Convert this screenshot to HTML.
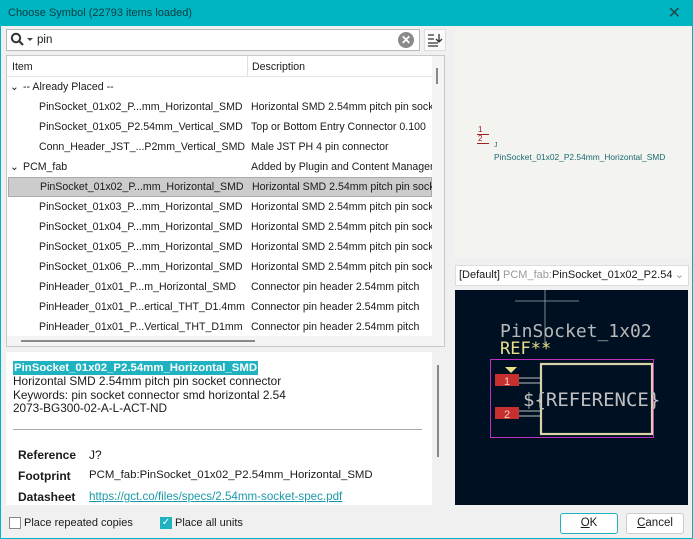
<!DOCTYPE html>
<html><head><style>
*{margin:0;padding:0;box-sizing:border-box}
body{width:693px;height:539px;overflow:hidden;background:#f0f0f0;font-family:"Liberation Sans",sans-serif;font-size:11px;color:#1a1a1a;position:relative}
.abs{position:absolute}
.title{left:0;top:0;width:693px;height:26px;background:#00b5c2;color:#0b3b40;font-size:11px;padding:7px 0 0 8px}
.frame{left:0;top:26px;width:693px;height:513px;border:1px solid #00b5c2;border-top:none}
.row{position:absolute;left:0;height:20px;line-height:20px;white-space:nowrap;width:425px;font-size:10.6px}
.row .a{position:absolute;left:32px}
.row .b{position:absolute;left:244px;width:181px;overflow:hidden}
</style></head><body>
<div class="abs title">Choose Symbol (22793 items loaded)</div>
<div class="abs" style="right:12px;top:3px;font-size:16px;color:#1a4a50">✕</div>
<div class="abs frame"></div>

<!-- search -->
<div class="abs" style="left:6px;top:29px;width:414px;height:22px;background:#fff;border:1px solid #b8b8b8"></div>
<svg class="abs" style="left:10px;top:32px" width="26" height="16"><circle cx="6" cy="6" r="4.2" fill="none" stroke="#333" stroke-width="2"/><line x1="9" y1="9" x2="13" y2="13" stroke="#333" stroke-width="2.2"/><path d="M17 6h6l-3 3z" fill="#444"/></svg>
<div class="abs" style="left:37px;top:34px;font-size:11.5px">pin</div>
<div class="abs" style="left:398px;top:32px;width:16px;height:16px;border-radius:50%;background:#8a8a8a;color:#fff;font-size:12px;line-height:16px;text-align:center;font-weight:bold">✕</div>
<div class="abs" style="left:424px;top:29px;width:22px;height:22px;background:#fafafa;border:1px solid #ddd"></div>
<svg class="abs" style="left:427px;top:33px" width="16" height="14"><path d="M1 2h6M1 6h6M1 10h10M1 13h10M12 1v8M9 6l3 3 3-3" stroke="#333" stroke-width="1.3" fill="none"/></svg>

<!-- tree -->
<div class="abs" style="left:6px;top:55px;width:439px;height:292px;background:#fff;border:1px solid #c8c8c8;overflow:hidden">
 <div class="abs" style="left:0;top:0;width:425px;height:21px;border-bottom:1px solid #e4e4e4"></div>
 <div class="abs" style="left:240px;top:0;width:1px;height:21px;background:#e0e0e0"></div>
 <div class="abs" style="left:5px;top:5px;font-size:10.6px">Item</div>
 <div class="abs" style="left:245px;top:5px;font-size:10.6px">Description</div>
 <div class="row" style="top:21px"><span style="position:absolute;left:3px">⌄</span><span style="position:absolute;left:16px">-- Already Placed --</span></div>
 <div class="row" style="top:41px"><span class="a">PinSocket_01x02_P...mm_Horizontal_SMD</span><span class="b">Horizontal SMD 2.54mm pitch pin socket</span></div>
 <div class="row" style="top:61px"><span class="a">PinSocket_01x05_P2.54mm_Vertical_SMD</span><span class="b">Top or Bottom Entry Connector 0.100</span></div>
 <div class="row" style="top:81px"><span class="a">Conn_Header_JST_...P2mm_Vertical_SMD</span><span class="b">Male JST PH 4 pin connector</span></div>
 <div class="row" style="top:101px"><span style="position:absolute;left:3px">⌄</span><span style="position:absolute;left:16px">PCM_fab</span><span class="b">Added by Plugin and Content Manager</span></div>
 <div class="row" style="top:121px;background:#cccccc;border:1px solid #aaa;left:1px;width:424px;line-height:18px"><span class="a" style="left:31px">PinSocket_01x02_P...mm_Horizontal_SMD</span><span class="b" style="left:243px">Horizontal SMD 2.54mm pitch pin socket</span></div>
 <div class="row" style="top:141px"><span class="a">PinSocket_01x03_P...mm_Horizontal_SMD</span><span class="b">Horizontal SMD 2.54mm pitch pin socket</span></div>
 <div class="row" style="top:161px"><span class="a">PinSocket_01x04_P...mm_Horizontal_SMD</span><span class="b">Horizontal SMD 2.54mm pitch pin socket</span></div>
 <div class="row" style="top:181px"><span class="a">PinSocket_01x05_P...mm_Horizontal_SMD</span><span class="b">Horizontal SMD 2.54mm pitch pin socket</span></div>
 <div class="row" style="top:201px"><span class="a">PinSocket_01x06_P...mm_Horizontal_SMD</span><span class="b">Horizontal SMD 2.54mm pitch pin socket</span></div>
 <div class="row" style="top:221px"><span class="a">PinHeader_01x01_P...m_Horizontal_SMD</span><span class="b">Connector pin header 2.54mm pitch</span></div>
 <div class="row" style="top:241px"><span class="a">PinHeader_01x01_P...ertical_THT_D1.4mm</span><span class="b">Connector pin header 2.54mm pitch</span></div>
 <div class="row" style="top:261px"><span class="a">PinHeader_01x01_P...Vertical_THT_D1mm</span><span class="b">Connector pin header 2.54mm pitch</span></div>
 <div class="abs" style="left:425px;top:0;width:13px;height:292px;background:#f4f4f4"></div>
 <div class="abs" style="left:429px;top:12px;width:2px;height:16px;background:#888"></div>
 <div class="abs" style="left:0;top:280px;width:425px;height:11px;background:#f4f4f4"></div>
 <div class="abs" style="left:14px;top:284px;width:234px;height:2px;background:#888"></div>
</div>

<!-- info -->
<div class="abs" style="left:6px;top:352px;width:426px;height:153px;background:#fff"></div>
<div class="abs" style="left:437px;top:365px;width:2px;height:92px;background:#888"></div>
<div class="abs" style="left:13px;top:361px;background:#1fb2c0;color:#fff;font-weight:bold;font-size:11.4px;padding:0 1px;line-height:14px">PinSocket_01x02_P2.54mm_Horizontal_SMD</div>
<div class="abs" style="left:13px;top:375px;font-size:11.8px;line-height:13.5px">Horizontal SMD 2.54mm pitch pin socket connector<br>Keywords: pin socket connector smd horizontal 2.54<br>2073-BG300-02-A-L-ACT-ND</div>
<div class="abs" style="left:13px;top:429px;width:409px;height:1px;background:#aaa"></div>
<div class="abs" style="left:18px;top:448px;font-weight:bold;font-size:12px">Reference</div>
<div class="abs" style="left:89px;top:448px;font-size:12px">J?</div>
<div class="abs" style="left:18px;top:469px;font-weight:bold;font-size:12px">Footprint</div>
<div class="abs" style="left:89px;top:469px;font-size:11.4px">PCM_fab:PinSocket_01x02_P2.54mm_Horizontal_SMD</div>
<div class="abs" style="left:18px;top:490px;font-weight:bold;font-size:12px">Datasheet</div>
<div class="abs" style="left:89px;top:490px;font-size:11.6px;color:#1a9aa8;text-decoration:underline">https://gct.co/files/specs/2.54mm-socket-spec.pdf</div>

<!-- bottom -->
<div class="abs" style="left:9px;top:517px;width:12px;height:12px;border:1px solid #888;background:#fff"></div>
<div class="abs" style="left:24px;top:517px">Place repeated copies</div>
<div class="abs" style="left:160px;top:517px;width:12px;height:12px;background:#1fb2c0;color:#fff;font-size:10px;line-height:12px;text-align:center">✓</div>
<div class="abs" style="left:175px;top:517px">Place all units</div>
<div class="abs" style="left:560px;top:513px;width:58px;height:21px;border:1.5px solid #1fb2c0;border-radius:3px;background:#fff;text-align:center;line-height:18px;font-size:11.5px"><u>O</u>K</div>
<div class="abs" style="left:626px;top:513px;width:58px;height:21px;border:1px solid #ccc;border-radius:3px;background:#fff;text-align:center;line-height:19px;font-size:11.5px"><u>C</u>ancel</div>

<!-- symbol preview -->
<div class="abs" style="left:455px;top:28px;width:235px;height:230px;background:#f3f3f0"></div>
<div class="abs" style="left:478px;top:125px;color:#a02020;font-size:8px;line-height:9px">1<br>2</div>
<div class="abs" style="left:477px;top:134px;width:12px;height:1px;background:#a02020"></div>
<div class="abs" style="left:477px;top:143px;width:12px;height:1px;background:#a02020"></div>
<div class="abs" style="left:494px;top:142px;color:#1a6a70;font-size:7px">J</div>
<div class="abs" style="left:494px;top:152px;color:#1a6a70;font-size:8.4px">PinSocket_01x02_P2.54mm_Horizontal_SMD</div>

<!-- dropdown -->
<div class="abs" style="left:455px;top:265px;width:234px;height:21px;background:#fff;border:1px solid #ddd;font-size:11px;line-height:19px;padding-left:3px;white-space:nowrap;overflow:hidden">[Default] <span style="color:#999">PCM_fab:</span>PinSocket_01x02_P2.54m<span style="position:absolute;right:4px;top:0;background:#fff;color:#999;padding-left:3px">⌄</span></div>

<!-- footprint -->
<svg class="abs" style="left:455px;top:290px" width="233" height="215">
<rect width="233" height="215" fill="#001023"/>
<line x1="90" y1="0" x2="90" y2="55" stroke="#9aa" stroke-width="0.8"/>
<line x1="60" y1="11" x2="124" y2="11" stroke="#9aa" stroke-width="0.8"/>
<text x="45" y="47" fill="#b8b8b8" font-family="DejaVu Sans Mono,monospace" font-size="18">PinSocket_1x02</text>
<text x="45" y="64" fill="#e8e088" font-family="DejaVu Sans Mono,monospace" font-size="17">REF**</text>
<rect x="35.5" y="69.5" width="163" height="78" fill="none" stroke="#c030c0" stroke-width="1"/>
<path d="M50 77h12l-6 6z" fill="#e8e088"/>
<rect x="40" y="84" width="24" height="12" fill="#c83030"/><text x="49" y="95" fill="#f0d0d0" font-size="11">1</text>
<rect x="40" y="117" width="24" height="12" fill="#c83030"/><text x="49" y="128" fill="#f0d0d0" font-size="11">2</text>
<path d="M64 88h22M64 93h22M64 121h22M64 126h22" stroke="#bbb" stroke-width="1"/>
<rect x="86" y="74" width="111" height="70" fill="none" stroke="#d8d4a8" stroke-width="2.2"/>
<text x="68" y="116" fill="#c0c0c0" font-family="DejaVu Sans Mono,monospace" font-size="19">${REFERENCE}</text>
</svg>
</body></html>
